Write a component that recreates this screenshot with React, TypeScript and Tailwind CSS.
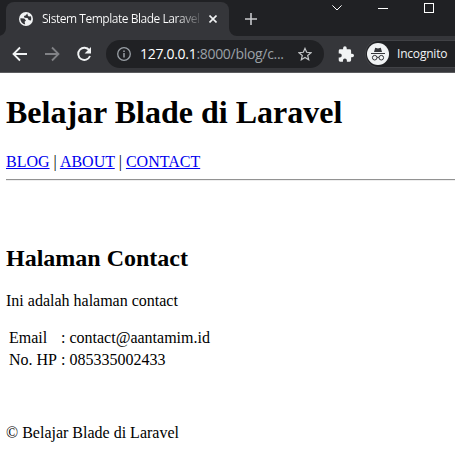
import React from "react";

function TabStrip() {
  return (
    <div className="flex h-9 items-start bg-[#202124] pl-1.5 pt-0.5">
      <div className="relative flex h-[34px] w-[223px] shrink-0 items-center rounded-t-lg bg-[#35363a] pl-[13px]">
        <svg className="absolute -left-2 bottom-0" width="8" height="8" viewBox="0 0 8 8">
          <path d="M8 0V8H0A8 8 0 0 0 8 0Z" fill="#35363a" />
        </svg>
        <svg className="absolute -right-2 bottom-0" width="8" height="8" viewBox="0 0 8 8">
          <path d="M0 0V8H8A8 8 0 0 1 0 0Z" fill="#35363a" />
        </svg>
        <svg className="shrink-0" width="14" height="14" viewBox="0 0 14 14">
          <circle cx="7" cy="7" r="7" fill="#f1f3f4" />
          <path d="M1.4 6.2L5.3 6.4 7 8.4 5.6 9.8 6.2 12.5A5.6 5.6 0 0 1 1.4 6.2ZM8.3 1.6L6.6 3.4 4.9 4.1 5.5 5.7 8.5 6 9.7 8 12 8.6A5.5 5.5 0 0 0 11.8 4.2L9.8 4.5 8.8 3.6Z" fill="#35363a" />
        </svg>
        <div className="ml-[9px] w-[160px] whitespace-nowrap bg-[linear-gradient(to_right,#fff_134px,#45464a_159px)] bg-clip-text text-[12px] leading-4 tracking-[-0.47px] text-transparent">
          Sistem Template Blade Laravel
        </div>
        <svg className="ml-[7px] shrink-0" width="8" height="8" viewBox="0 0 8 8">
          <path d="M.5.5l7 7M7.5.5l-7 7" stroke="#f1f3f4" strokeWidth="1.6" />
        </svg>
      </div>
      <svg className="ml-4 mt-[11px] shrink-0" width="12" height="12" viewBox="0 0 12 12">
        <path d="M6 0v12M0 6h12" stroke="#c7c9cc" strokeWidth="1.6" />
      </svg>
      <svg className="ml-[75px] mt-[3px] shrink-0" width="10" height="6" viewBox="0 0 10 6">
        <path d="M.4.4L5 5 9.6.4" fill="none" stroke="#fff" strokeWidth="1" />
      </svg>
      <svg className="ml-9 mt-[6px] shrink-0" width="10" height="1" viewBox="0 0 10 1">
        <rect width="10" height="1" fill="#fff" />
      </svg>
      <svg className="ml-9 mt-px shrink-0" width="10" height="10" viewBox="0 0 10 10">
        <rect x=".5" y=".5" width="9" height="9" fill="none" stroke="#fff" />
      </svg>
    </div>
  );
}

function Toolbar() {
  return (
    <div className="flex h-[37px] items-center border-b border-[#5b5c5f] bg-[#35363a] pl-3">
      <svg className="shrink-0" width="16" height="16" viewBox="0 0 16 16">
        <path d="M15 8H2M8 1.5L1.5 8 8 14.5" fill="none" stroke="#f1f3f4" strokeWidth="1.8" />
      </svg>
      <svg className="ml-4 shrink-0" width="16" height="16" viewBox="0 0 16 16">
        <path d="M1 8H14M8 1.5L14.5 8 8 14.5" fill="none" stroke="#818286" strokeWidth="1.8" />
      </svg>
      <svg className="ml-4 shrink-0" width="16" height="16" viewBox="0 0 16 16">
        <path d="M13.3 4.3A6.1 6.1 0 1 0 14 10" fill="none" stroke="#f1f3f4" strokeWidth="1.9" />
        <path d="M15 1v6.4H8.6Z" fill="#f1f3f4" />
      </svg>
      <div className="ml-[14px] flex h-7 w-[218px] shrink-0 items-center rounded-full bg-[#202124] pl-[11px]">
        <svg className="shrink-0" width="14" height="14" viewBox="0 0 14 14">
          <circle cx="7" cy="7" r="6.3" fill="none" stroke="#9aa0a6" strokeWidth="1.3" />
          <path d="M7 6v4.5M7 3.5V5" stroke="#9aa0a6" strokeWidth="1.5" />
        </svg>
        <span className="ml-[9px] w-[150px] whitespace-nowrap text-[14px] leading-5 tracking-[-0.3px] text-[#9aa0a6]">
          <span className="text-white">127.0.0.1</span>:8000/blog/c...
        </span>
        <svg className="ml-2 shrink-0" width="14" height="14" viewBox="0 0 14 14">
          <path d="M7 1.4l1.7 3.9 4.3.4-3.3 2.8 1 4.2L7 10.5l-3.7 2.2 1-4.2L1 5.7l4.3-.4Z" fill="none" stroke="#c4c7c9" strokeWidth="1.2" />
        </svg>
      </div>
      <svg className="ml-[14px] shrink-0" width="16" height="16" viewBox="1 0.5 22 22">
        <path d="M20.5 11H19V7a2 2 0 0 0-2-2h-4V3.5a2.5 2.5 0 0 0-5 0V5H4a2 2 0 0 0-2 2v3.8h1.5a2.7 2.7 0 0 1 0 5.4H2V20a2 2 0 0 0 2 2h3.8v-1.5a2.7 2.7 0 0 1 5.4 0V22H17a2 2 0 0 0 2-2v-4h1.5a2.5 2.5 0 0 0 0-5Z" fill="#f1f3f4" />
      </svg>
      <div className="ml-[11px] flex h-7 w-[92px] shrink-0 items-center rounded-l-full rounded-r-[13px] border border-[#414246] bg-[#202124] pl-px">
        <svg className="shrink-0" width="22" height="22" viewBox="0 0 22 22">
          <circle cx="11" cy="11" r="11" fill="#f1f3f4" />
          <path d="M7 9l1.2-4.2 2.8.6 2.8-.6L15 9Z" fill="#35363a" />
          <path d="M4 10.5h14M10 14.5q1-.7 2 0" stroke="#35363a" fill="none" />
          <circle cx="7.7" cy="14.7" r="2.3" fill="none" stroke="#35363a" />
          <circle cx="14.3" cy="14.7" r="2.3" fill="none" stroke="#35363a" />
        </svg>
        <span className="ml-2 whitespace-nowrap text-[12px] leading-4 tracking-[-0.2px] text-[#f1f3f4]">Incognito</span>
      </div>
    </div>
  );
}

function Page() {
  return (
    <main className="pl-1.5 pt-[21px] font-['Liberation_Serif','Times_New_Roman',serif] text-[16px] leading-[18px] text-black">
      <h1 className="text-[32px] font-bold leading-[37px]">Belajar Blade di Laravel</h1>
      <nav className="mt-[22px] whitespace-pre">
        <a href="#blog" className="text-[#0000ee] underline">BLOG</a> |{" "}
        <a href="#about" className="text-[#0000ee] underline">ABOUT</a> |{" "}
        <a href="#contact" className="text-[#0000ee] underline">CONTACT</a>
      </nav>
      <hr className="mt-2 h-0.5 border-t border-b border-t-[#929292] border-b-[#eeeeee]" />
      <h2 className="mt-[63px] text-[24px] font-bold leading-7">Halaman Contact</h2>
      <p className="mt-5">Ini adalah halaman contact</p>
      <table className="mt-4 border-separate border-spacing-[2px]">
        <tbody>
          <tr>
            <td className="p-px">Email</td>
            <td className="p-px">: contact@aantamim.id</td>
          </tr>
          <tr>
            <td className="p-px">No. HP</td>
            <td className="p-px">: 085335002433</td>
          </tr>
        </tbody>
      </table>
      <footer className="mt-[52px]">© Belajar Blade di Laravel</footer>
    </main>
  );
}

export default function App() {
  return (
    <div className="h-[452px] w-[455px] overflow-hidden bg-white font-['Open_Sans','Noto_Sans',sans-serif]">
      <TabStrip />
      <Toolbar />
      <Page />
    </div>
  );
}
